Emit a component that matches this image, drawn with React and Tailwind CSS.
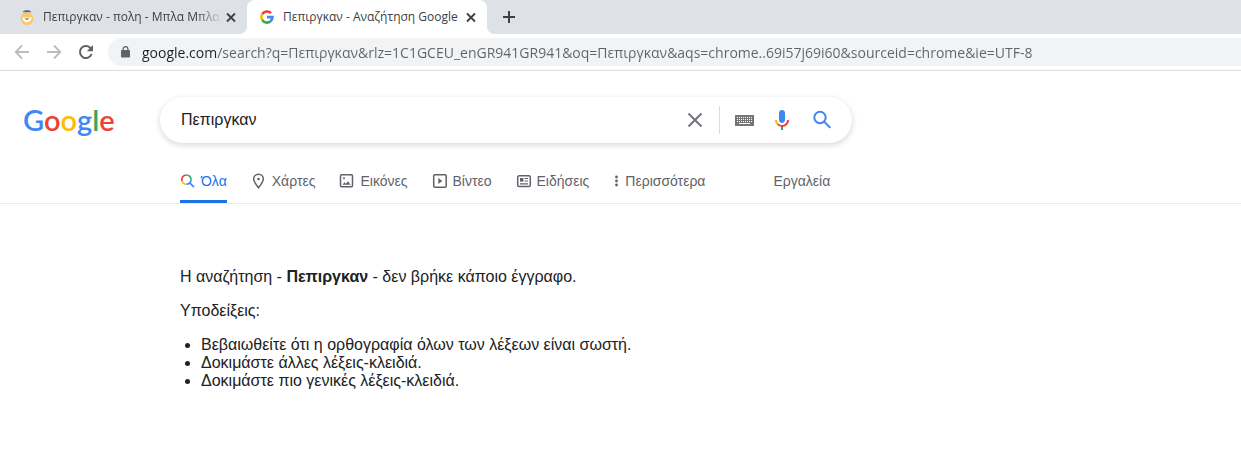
import { clsx } from "clsx";

const URL_TEXT =
  "google.com/search?q=Πεπιργκαν&rlz=1C1GCEU_enGR941GR941&oq=Πεπιργκαν&aqs=chrome..69i57j69i60&sourceid=chrome&ie=UTF-8";

function CloseIcon() {
  return (
    <svg viewBox="0 0 16 16" className="size-4" fill="none" stroke="#3c4043" strokeWidth="1.8">
      <path d="M4 4.5l8 8M12 4.5l-8 8" />
    </svg>
  );
}

function FaceIcon() {
  return (
    <svg viewBox="0 0 16 16" className="size-4 shrink-0">
      <circle cx="8" cy="9.6" r="6.4" fill="#fbc968" />
      <path d="M3.6 3.2C5 .4 11 .4 12.4 3.2z" fill="#6b6f75" />
      <path d="M3.5 8.4h9c0 6.4-9 6.4-9 0z" fill="#fff" />
      <path d="M5.4 9.4h5.2L8 11z" fill="#6b5a3a" />
    </svg>
  );
}

function GoogleMark() {
  return (
    <svg viewBox="0 0 16 16" className="size-4 shrink-0" fill="none" strokeWidth="2.6">
      <path d="M3.2 5.2A5.5 5.5 0 0 1 12 4.2" stroke="#ea4335" />
      <path d="M3.2 10.8A5.5 5.5 0 0 1 3.2 5.2" stroke="#fbbc05" />
      <path d="M11.6 12.2A5.5 5.5 0 0 1 3.2 10.8" stroke="#34a853" />
      <path d="M8 8.1H13.5A5.5 5.5 0 0 1 11.6 12.2" stroke="#4285f4" />
    </svg>
  );
}

function Tab({ icon, title, active }) {
  return (
    <div className={clsx("relative flex h-full w-60 items-center pr-2 pl-3", active && "rounded-t-lg bg-white")}>
      {icon}
      <span
        className={clsx(
          "ml-2 flex-1 whitespace-nowrap text-[#3c4043]",
          !active && "mask-r-from-85%"
        )}
      >
        {title}
      </span>
      <button aria-label="Κλείσιμο">
        <CloseIcon />
      </button>
      {active && (
        <>
          <span className="absolute bottom-0 -left-2 size-2 bg-[radial-gradient(circle_at_0_0,#dee1e6_8px,white_8px)]" />
          <span className="absolute -right-2 bottom-0 size-2 bg-[radial-gradient(circle_at_100%_0,#dee1e6_8px,white_8px)]" />
        </>
      )}
    </div>
  );
}

function Toolbar() {
  return (
    <div className="flex h-[37px] items-center border-b border-[#dadce0] pl-3.5">
      <button aria-label="Πίσω">
        <svg viewBox="0 0 16 16" className="size-4" fill="none" stroke="#babcbe" strokeWidth="1.8">
          <path d="M15 8H2M8 1.5L1.7 8 8 14.5" />
        </svg>
      </button>
      <button className="ml-4" aria-label="Εμπρός">
        <svg viewBox="0 0 16 16" className="size-4" fill="none" stroke="#babcbe" strokeWidth="1.8">
          <path d="M1 8h13M8 1.5L14.3 8 8 14.5" />
        </svg>
      </button>
      <button className="ml-4" aria-label="Ανανέωση">
        <svg viewBox="0 0 16 16" className="size-4" fill="none" stroke="#5f6368" strokeWidth="2">
          <path d="M13.6 10A6 6 0 1 1 12.2 3.8L13.5 5.2" />
          <path d="M15 1v6.2H8.8z" fill="#5f6368" stroke="none" />
        </svg>
      </button>
      <label className="ml-3.5 flex h-7 flex-1 items-center rounded-l-full bg-[#f1f3f4] pl-3">
        <svg viewBox="0 0 10 12" className="h-3 w-2.5 shrink-0">
          <rect x="1" y="4" width="9" height="7.5" rx="1" fill="#5f6368" />
          <path d="M3.1 4.5V3a2.4 2.4 0 0 1 4.8 0v1.5" fill="none" stroke="#5f6368" strokeWidth="1.3" />
        </svg>
        <input
          aria-label="Διεύθυνση"
          defaultValue={URL_TEXT}
          className="ml-3 h-full flex-1 bg-[linear-gradient(to_right,#202124_75px,#5f6368_75px)] bg-clip-text text-sm text-transparent outline-none"
        />
      </label>
    </div>
  );
}

function SearchBox() {
  return (
    <form className="flex h-[46px] w-[692px] items-center rounded-full bg-white pr-5 pl-[21px] shadow-[0_2px_5px_1px_rgba(64,60,67,0.16)]">
      <input
        aria-label="Αναζήτηση"
        defaultValue="Πεπιργκαν"
        className="h-full min-w-0 flex-1 text-base text-[#202124] outline-none"
      />
      <button type="button" aria-label="Διαγραφή" className="mr-3.5">
        <svg viewBox="0 0 20 20" className="size-5" fill="none" stroke="#70757a" strokeWidth="2">
          <path d="M3.5 3.5l13 13M16.5 3.5l-13 13" />
        </svg>
      </button>
      <span className="mr-3.5 h-7 w-px bg-[#dadce0]" />
      <button type="button" aria-label="Πληκτρολόγιο" className="mr-4">
        <svg viewBox="0 0 20 12" className="h-3 w-5">
          <rect x="1" y="1" width="19" height="11" fill="#757575" />
          <path d="M3 3.5h15M3 5.5h15M3 7.5h15" stroke="#fff" strokeDasharray="1 1" />
          <path d="M5 9.5h11" stroke="#fff" />
        </svg>
      </button>
      <button type="button" aria-label="Φωνητική αναζήτηση" className="mr-[18px]">
        <svg viewBox="0 0 24 24" className="size-6">
          <path fill="#4285f4" d="M12 15c1.66 0 3-1.31 3-2.97V4.98C15 3.32 13.66 2 12 2S9 3.32 9 4.98v7.05C9 13.7 10.34 15 12 15z" />
          <path fill="#34a853" d="M11 18.08h2V22h-2z" />
          <path fill="#fbbc05" d="M7.05 16.87C5.78 15.59 5 13.9 5 12h2c0 1.38.56 2.42 1.46 3.32l-1.41 1.55z" />
          <path fill="#ea4335" d="M12 16.93a4.97 4.97 0 0 1-3.54-1.55l-1.41 1.49A6.99 6.99 0 0 0 12 18.94c3.87 0 6.99-2.92 6.99-7h-1.99c0 2.92-2.24 4.99-5 4.99z" />
        </svg>
      </button>
      <button aria-label="Αναζήτηση Google">
        <svg viewBox="0 0 20 20" className="size-5" fill="none" stroke="#4285f4" strokeWidth="2">
          <circle cx="8" cy="7.5" r="5.7" />
          <path d="M12.2 11.7l6.2 6.2" />
        </svg>
      </button>
    </form>
  );
}

const outline = { className: "size-4", viewBox: "0 0 16 16", fill: "none", stroke: "currentColor", strokeWidth: 1.5 };

const NAV = [
  {
    label: "Όλα",
    active: true,
    icon: (
      <svg viewBox="0 0 16 16" className="size-4" fill="none" strokeWidth="1.6">
        <path d="M2.2 8.5A4.6 4.6 0 0 1 6.5 2" stroke="#ea4335" />
        <path d="M6.5 2a4.6 4.6 0 0 1 4.6 4.6" stroke="#34a853" />
        <path d="M6.5 11.2A4.6 4.6 0 0 1 2.2 8.5" stroke="#fbbc05" />
        <path d="M11.1 6.6a4.6 4.6 0 0 1-4.6 4.6M9.8 9.9l4.2 4.2" stroke="#4285f4" />
      </svg>
    ),
  },
  {
    label: "Χάρτες",
    icon: (
      <svg {...outline}>
        <path d="M7.5 14.8C4.7 11.2 2.7 8.6 2.7 6a4.8 4.8 0 0 1 9.6 0c0 2.6-2 5.2-4.8 8.8z" />
        <circle cx="7.5" cy="6" r="1.3" fill="currentColor" stroke="none" />
      </svg>
    ),
  },
  {
    label: "Εικόνες",
    icon: (
      <svg {...outline}>
        <rect x="1.5" y="1.8" width="12" height="12" rx="1.2" />
        <path d="M3.5 11.8l2-2.6 1.5 1.6 2-2.6 2.6 3.6z" fill="currentColor" stroke="none" />
        <circle cx="5" cy="5.3" r="1" fill="currentColor" stroke="none" />
      </svg>
    ),
  },
  {
    label: "Βίντεο",
    icon: (
      <svg {...outline}>
        <rect x="1.7" y="1.8" width="12.5" height="12.5" rx="1.2" />
        <path d="M6.3 5v6l4-3z" fill="currentColor" stroke="none" />
      </svg>
    ),
  },
  {
    label: "Ειδήσεις",
    icon: (
      <svg {...outline}>
        <rect x="1.7" y="2.8" width="12.6" height="10.6" rx="1.5" />
        <path d="M8.6 5.5H12M8.6 8H12M4 10.8h8" strokeWidth="1.2" />
        <rect x="4" y="5" width="3.4" height="3.6" fill="currentColor" stroke="none" />
      </svg>
    ),
  },
  {
    label: "Περισσότερα",
    icon: (
      <svg viewBox="0 0 7 16" className="h-4 w-[7px]" fill="currentColor">
        <circle cx="3.5" cy="4" r="1.4" />
        <circle cx="3.5" cy="8" r="1.4" />
        <circle cx="3.5" cy="12" r="1.4" />
      </svg>
    ),
  },
];

function SearchNav() {
  return (
    <div className="border-b border-[#ebebeb] pl-45 text-sm text-[#5f6368]">
      <nav className="flex gap-6">
        {NAV.map(({ label, icon, active }) => (
          <a
            key={label}
            href="#"
            className={clsx(
              "flex h-11 items-center gap-[5px] border-b-3 pt-0.5",
              active ? "border-[#1a73e8] text-[#1a73e8]" : "border-transparent"
            )}
          >
            {icon}
            {label}
          </a>
        ))}
        <button className="ml-11 h-11 border-b-3 border-transparent pt-0.5">Εργαλεία</button>
      </nav>
    </div>
  );
}

function App() {
  return (
    <div className="min-h-screen bg-white font-['Liberation_Sans',Arial,sans-serif] text-[#202124]">
      {/* Browser chrome */}
      <div className="font-['Open_Sans','Noto_Sans',sans-serif] text-xs">
        <div className="flex h-[34px] items-center bg-[#dee1e6] pl-[7px]">
          <Tab icon={<FaceIcon />} title="Πεπιργκαν - πολη - Μπλα Μπλα" />
          <Tab icon={<GoogleMark />} title="Πεπιργκαν - Αναζήτηση Google" active />
          <button className="ml-3.5" aria-label="Νέα καρτέλα">
            <svg viewBox="0 0 16 16" className="size-4" fill="none" stroke="#3c4043" strokeWidth="2">
              <path d="M8 2v12M2 8h12" />
            </svg>
          </button>
        </div>
        <Toolbar />
      </div>

      {/* Google header */}
      <header className="flex items-center pt-[26px] pb-4">
        <a href="#" className="w-40 pl-[23px] font-[Lato,sans-serif] text-[29px] leading-[46px] font-semibold">
          <span className="text-[#4285f4]">G</span>
          <span className="text-[#ea4335]">o</span>
          <span className="text-[#fbbc05]">o</span>
          <span className="text-[#4285f4]">g</span>
          <span className="text-[#34a853]">l</span>
          <span className="text-[#ea4335]">e</span>
        </a>
        <SearchBox />
      </header>
      <SearchNav />

      {/* No results */}
      <main className="space-y-4 px-45 pt-16 text-base leading-[18px]">
        <p>
          Η αναζήτηση - <b>Πεπιργκαν</b> - δεν βρήκε κάποιο έγγραφο.
        </p>
        <p>Υποδείξεις:</p>
        <ul className="list-disc pl-[21px]">
          <li>Βεβαιωθείτε ότι η ορθογραφία όλων των λέξεων είναι σωστή.</li>
          <li>Δοκιμάστε άλλες λέξεις-κλειδιά.</li>
          <li>Δοκιμάστε πιο γενικές λέξεις-κλειδιά.</li>
        </ul>
      </main>
    </div>
  );
}

export default App;
